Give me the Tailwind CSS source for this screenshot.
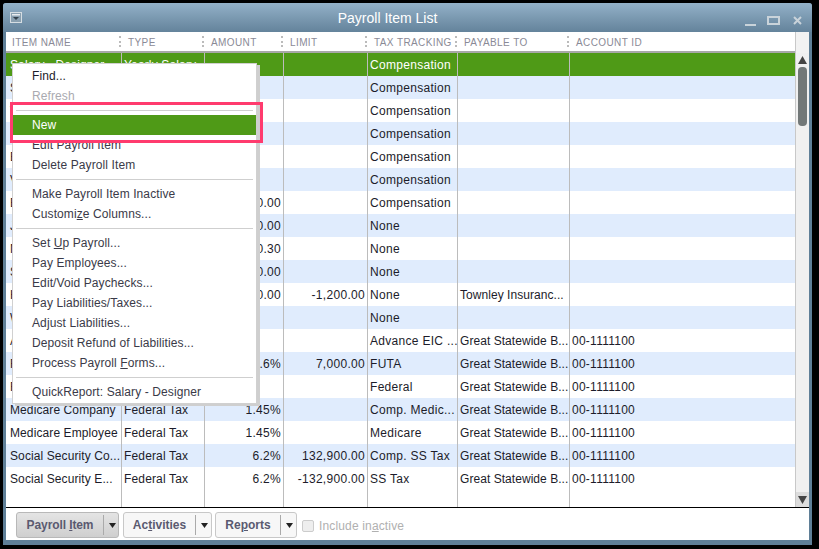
<!DOCTYPE html>
<html lang="en">
<head>
<meta charset="UTF-8">
<title>Payroll Item List</title>
<script src="https://cdn.jsdelivr.net/npm/@tailwindcss/browser@4"></script>
</head>
<body class="bg-black w-[819px] h-[549px] overflow-hidden font-['Liberation_Sans',Arial,sans-serif] text-[12px] text-[#1c1c2a]">
<div class="relative ml-[3px] mt-[3px] w-[809px] h-[542px] bg-[#5f7f97] rounded-t-[3px] flex flex-col">

  <!-- title bar -->
  <div class="h-[29px] shrink-0 flex items-center justify-center pr-[40px] pt-[2px] relative bg-linear-to-b from-[#93b1c8] to-[#64839b] rounded-t-[3px] text-white text-[14px]">
    <span>Payroll Item List</span>
    <svg class="absolute left-[7px] top-[9px]" width="12" height="11" viewBox="0 0 12 11"><rect x="0.5" y="0.5" width="11" height="10" fill="#8aa0b0" stroke="#d5dde2"/><rect x="2" y="2" width="8" height="1.5" fill="#e8ecef"/><path d="M3 5h6L6 8z" fill="#33414c"/></svg>
    <div class="absolute right-[10px] top-[12px] flex items-center">
      <div class="w-[11px] h-[2px] mt-[9px] bg-[#c9d3da]"></div>
      <div class="w-[13px] h-[9px] ml-[11px] border-2 border-[#c9d3da]"></div>
      <svg class="ml-[13px]" width="9" height="9" viewBox="0 0 9 9"><path d="M1 1l7 7M8 1l-7 7" stroke="#c9d3da" stroke-width="2"/></svg>
    </div>
  </div>

  <div class="mx-[3px] flex-1 bg-white flex flex-col">
    <!-- header + list -->
    <div class="flex h-[476px] shrink-0 border-b border-black">
      <div class="w-[789px] flex flex-col">
        <div class="h-[21px] shrink-0 flex text-[10px] tracking-[0.4px] text-[#8a8a96] border-b-2 border-[#a8a8a8] leading-[21px]">
          <div class="w-[115px] pl-[6px] relative">ITEM NAME<span class="absolute right-0 top-[4px] h-[11px] border-r-2 border-dotted border-[#bbb]"></span></div>
          <div class="w-[83px] pl-[7px] relative">TYPE<span class="absolute right-0 top-[4px] h-[11px] border-r-2 border-dotted border-[#bbb]"></span></div>
          <div class="w-[79px] pl-[7px] relative">AMOUNT<span class="absolute right-0 top-[4px] h-[11px] border-r-2 border-dotted border-[#bbb]"></span></div>
          <div class="w-[84px] pl-[7px] relative">LIMIT<span class="absolute right-0 top-[4px] h-[11px] border-r-2 border-dotted border-[#bbb]"></span></div>
          <div class="w-[90px] pl-[7px] relative">TAX TRACKING<span class="absolute right-0 top-[4px] h-[11px] border-r-2 border-dotted border-[#bbb]"></span></div>
          <div class="w-[112px] pl-[7px] relative">PAYABLE TO<span class="absolute right-0 top-[4px] h-[11px] border-r-2 border-dotted border-[#bbb]"></span></div>
          <div class="flex-1 pl-[7px]">ACCOUNT ID</div>
        </div>
        <div id="rows" class="flex-1 relative"></div>
      </div>
      <!-- scrollbar -->
      <div class="flex-1 flex flex-col bg-[#f0f0f0] border-l border-[#c8c8c8]">
        <div class="h-[21px] bg-[#f2f2f2]"></div>
        <div class="h-[14px] flex items-center justify-center"><svg width="9" height="8" viewBox="0 0 9 8"><path d="M4.500 0L9 8H0z" fill="#444"/></svg></div>
        <div class="w-[9px] h-[59px] ml-[2px] rounded-[4px] bg-[#727878]"></div>
        <div class="flex-1"></div>
        <div class="h-[15px] bg-[#dcdcdc] flex items-center justify-center"><svg width="9" height="8" viewBox="0 0 9 8"><path d="M0 0H9L4.500 8z" fill="#444"/></svg></div>
      </div>
    </div>

    <!-- footer buttons -->
    <div class="flex-1 flex items-start pt-[4px] pl-[10px] text-[12px] font-bold text-[#5a5a70]">
      <div class="w-[103px] h-[26px] rounded-[3px] border border-[#b8b8b8] bg-linear-to-b from-[#e4e4e4] to-[#cfcfcf] flex items-center">
        <span class="w-[86px] text-center tracking-[-0.1px]">Payroll <u>I</u>tem</span>
        <span class="h-[20px] border-l border-[#aaa]"></span>
        <svg class="ml-[5px]" width="7" height="5" viewBox="0 0 7 5"><path d="M0 0h7L3.500 5z" fill="#222"/></svg>
      </div>
      <div class="w-[89px] h-[26px] ml-[4px] rounded-[3px] border border-[#c8c8c8] bg-[#f7f7f7] flex items-center">
        <span class="w-[71px] text-center">Ac<u>t</u>ivities</span>
        <span class="h-[20px] border-l border-[#aaa]"></span>
        <svg class="ml-[5px]" width="7" height="5" viewBox="0 0 7 5"><path d="M0 0h7L3.500 5z" fill="#222"/></svg>
      </div>
      <div class="w-[82px] h-[26px] ml-[3px] rounded-[3px] border border-[#c8c8c8] bg-[#f7f7f7] flex items-center">
        <span class="w-[64px] text-center">Re<u>p</u>orts</span>
        <span class="h-[20px] border-l border-[#aaa]"></span>
        <svg class="ml-[5px]" width="7" height="5" viewBox="0 0 7 5"><path d="M0 0h7L3.500 5z" fill="#222"/></svg>
      </div>
      <div class="flex items-center h-[26px] ml-[5px] pt-[2px] font-normal text-[#b0b0b0] tracking-[0.15px]">
        <span class="w-[12px] h-[12px] mr-[5px] rounded-[2px] border border-[#ccc] bg-[#eee]"></span>
        <span>Include in<u>a</u>ctive</span>
      </div>
    </div>
  </div>
  <div class="h-[5px] shrink-0"></div>

  <!-- context menu -->
  <div class="absolute left-[9px] top-[60px] w-[245px] h-[341px] bg-white border border-[#d0d0d0] shadow-[3px_2px_0_#cfcfcf] pt-[2px] text-[#3a3a48] tracking-[0.1px]">
    <div class="h-[20px] pl-[19px] leading-[20px] text-[#1c1c2a]">Find...</div>
    <div class="h-[20px] pl-[19px] leading-[20px] text-[#aaaab0]">Refresh</div>
    <div class="h-[9px] flex items-center px-[3px]"><div class="w-full h-px bg-[#cfcfcf]"></div></div>
    <div class="h-[20px] pl-[19px] leading-[20px] bg-[#4f9a17] text-white">New</div>
    <div class="h-[20px] pl-[19px] leading-[20px]">Edit Payroll Item</div>
    <div class="h-[20px] pl-[19px] leading-[20px]">Delete Payroll Item</div>
    <div class="h-[9px] flex items-center px-[3px]"><div class="w-full h-px bg-[#cfcfcf]"></div></div>
    <div class="h-[20px] pl-[19px] leading-[20px]">Make Payroll Item Inactive</div>
    <div class="h-[20px] pl-[19px] leading-[20px]">Customi<u>z</u>e Columns...</div>
    <div class="h-[9px] flex items-center px-[3px]"><div class="w-full h-px bg-[#cfcfcf]"></div></div>
    <div class="h-[20px] pl-[19px] leading-[20px]">Set <u>U</u>p Payroll...</div>
    <div class="h-[20px] pl-[19px] leading-[20px]">Pay Employees...</div>
    <div class="h-[20px] pl-[19px] leading-[20px]">Edit/Void Paychecks...</div>
    <div class="h-[20px] pl-[19px] leading-[20px]">Pay Liabilities/Taxes...</div>
    <div class="h-[20px] pl-[19px] leading-[20px]">Adjust Liabilities...</div>
    <div class="h-[20px] pl-[19px] leading-[20px]">Deposit Refund of Liabilities...</div>
    <div class="h-[20px] pl-[19px] leading-[20px]">Process Payroll <u>F</u>orms...</div>
    <div class="h-[9px] flex items-center px-[3px]"><div class="w-full h-px bg-[#cfcfcf]"></div></div>
    <div class="h-[20px] pl-[19px] leading-[20px]">QuickReport: Salary - Designer</div>
  </div>
  <!-- annotation box -->
  <div class="absolute left-[7px] top-[99px] w-[253px] h-[41px] border-[3px] border-[#ff3b6e]"></div>
</div>

<script>
  // name, type, amount, limit, tracking, payable, account
  const data = [
    ['Salary - Designer','Yearly Salary','','','Compensation','',''],
    ['Sick Salary','Yearly Salary','','','Compensation','',''],
    ['Vacation Salary','Yearly Salary','','','Compensation','',''],
    ['Hourly Wage','Hourly Wage','','','Compensation','',''],
    ['Bonus','Addition','','','Compensation','',''],
    ['Vacation Hourly','Hourly Wage','','','Compensation','',''],
    ['Bonus Addition','Addition','0.00','','Compensation','',''],
    ['Job Expense','Addition','0.00','','None','',''],
    ['Mileage Reimb.','Addition','0.30','','None','',''],
    ['Supplies','Addition','0.00','','None','',''],
    ['Health Insurance','Deduction','0.00','-1,200.00','None','Townley Insuranc...',''],
    ['Workers Comp','Company','','','None','',''],
    ['Advance EIC','Federal Tax','','','Advance EIC ...','Great Statewide B...','00-1111100'],
    ['Federal Unemp.','Federal Tax','0.6%','7,000.00','FUTA','Great Statewide B...','00-1111100'],
    ['Federal Withholding','Federal Tax','','','Federal','Great Statewide B...','00-1111100'],
    ['Medicare Company','Federal Tax','1.45%','','Comp. Medic...','Great Statewide B...','00-1111100'],
    ['Medicare Employee','Federal Tax','1.45%','','Medicare','Great Statewide B...','00-1111100'],
    ['Social Security Co...','Federal Tax','6.2%','132,900.00','Comp. SS Tax','Great Statewide B...','00-1111100'],
    ['Social Security E...','Federal Tax','6.2%','-132,900.00','SS Tax','Great Statewide B...','00-1111100']
  ];
  const rowsEl = document.getElementById('rows');
  let html = '';
  data.forEach((r, i) => {
    const bg = i === 0 ? 'bg-[#4f9a17] text-white' : (i % 2 === 1 ? 'bg-[#e0ecfd]' : 'bg-white');
    html += `<div class="flex h-[23px] leading-[25px] text-[12px] whitespace-nowrap ${bg}">
      <div class="w-[115px] pl-[4px] overflow-hidden tracking-[0.1px]">${r[0]}</div>
      <div class="w-[83px] pl-[3px] tracking-[0.15px]">${r[1]}</div>
      <div class="w-[79px] pr-[2px] text-right tracking-[0.3px]">${r[2]}</div>
      <div class="w-[84px] pr-[2px] text-right tracking-[0.3px]">${r[3]}</div>
      <div class="w-[90px] pl-[3px] tracking-[0.3px]">${r[4]}</div>
      <div class="w-[112px] pl-[3px] tracking-[0.05px]">${r[5]}</div>
      <div class="flex-1 pl-[3px] tracking-[0.25px]">${r[6]}</div>
    </div>`;
  });
  // column rules run the full height of the list
  [115, 198, 277, 361, 451, 563].forEach(x => {
    html += `<div class="absolute top-0 bottom-0 w-px bg-[#bcbcbc]" style="left:${x}px"></div>`;
  });
  rowsEl.innerHTML = html;
</script>
</body>
</html>
